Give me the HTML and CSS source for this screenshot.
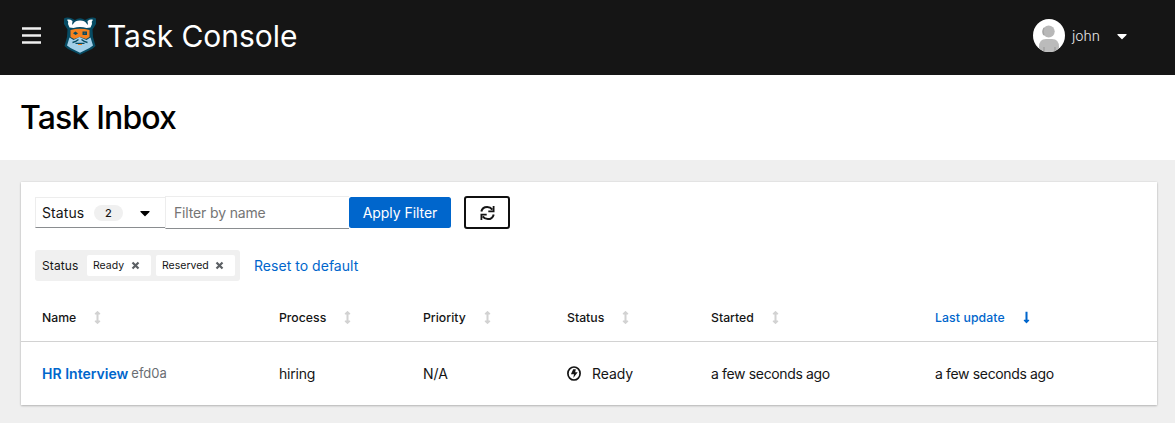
FILE: index.html
```html
<!DOCTYPE html>
<html lang="en">
<head>
<meta charset="utf-8">
<title>Task Console</title>
<link rel="stylesheet" href="styles.css">
</head>
<body>
<svg class="defs" aria-hidden="true">
  <symbol id="sort" viewBox="0 0 256 512"><path d="M214.059 377.941H168V134.059h46.059c21.382 0 32.09-25.851 16.971-40.971L144.971 7.029c-9.373-9.373-24.568-9.373-33.941 0L24.971 93.088c-15.119 15.119-4.411 40.971 16.971 40.971H88v243.882H41.941c-21.382 0-32.09 25.851-16.971 40.971l86.059 86.059c9.373 9.373 24.568 9.373 33.941 0l86.059-86.059c15.12-15.119 4.412-40.971-16.97-40.971z"/></symbol>
  <symbol id="caret" viewBox="0 0 320 512"><path d="M31.3 192h257.3c17.8 0 26.7 21.5 14.1 34.1L174.1 354.8c-7.8 7.8-20.5 7.8-28.3 0L17.2 226.1C4.6 213.5 13.5 192 31.3 192z"/></symbol>
  <symbol id="close" viewBox="0 0 9 9"><path d="M1.5 1.5l6 6M7.5 1.5l-6 6" fill="none" stroke="currentColor" stroke-width="2.2"/></symbol>
</svg>
<header class="masthead">
  <button class="menu" aria-label="Menu"><svg width="19" height="18" viewBox="0 0 19 18"><path d="M0 1.500h19M0 8.500h19M0 15.500h19" stroke="#f0f0f0" stroke-width="2.3"/></svg></button>
  <svg class="logo" width="34" height="38" viewBox="0 0 34 38">
    <path d="M1 1.500Q4-.3 9 1.600L12 3Q17-.7 22 3L25 1.600Q30-.3 33 1.500L33 7 29.500 12.500 30 20 32.500 29 29 32 17 37.800 5 32 1.500 29 4 20 4.500 12.500 1 7Z" fill="#074b63"/>
    <path d="M4 2.700Q7 2 9.500 4L9 8 10.500 6.500Q12 3.500 17 3.500 22 3.500 23.500 6.500L25 8 24.500 4Q27 2 30 2.700 28 4.500 29 7L27.500 10.500 23.500 11Q17 9 10.500 11L6.500 10.500 5 7Q6 4.500 4 2.700Z" fill="#fff"/>
    <path d="M7.500 13Q17 10.500 26.500 13L26.500 20 23 22 17 20 11 22 7.500 20Z" fill="#f58220"/>
    <path d="M10 16.200L12.500 14.500 15 16.500 12.500 18ZM19.500 14.500h4.500v3.500h-4.500Z" fill="#074b63"/>
    <path d="M21 16.200h1.500" stroke="#a65620"/>
    <path d="M6.500 20.500L10.500 23 16.500 20 23.500 23 27.500 20.500 30 28.500 26.500 31 17 35.800 7.500 31 4 28.500Z" fill="#a3cfe9"/>
    <path d="M9.500 25.500Q13 24.800 15.500 22.500M18.500 22.500Q21 24.800 24.500 25.500M12.500 26.300h9" fill="none" stroke="#074b63" stroke-width="1.300"/>
    <path d="M15 27.500h4" stroke="#f58220"/>
  </svg>
  <div class="brand">Task Console</div>
  <div class="user">
    <svg width="32" height="33" viewBox="0 0 32 33">
      <clipPath id="disc"><ellipse cx="16" cy="16.500" rx="16" ry="16.500"/></clipPath>
      <g clip-path="url(#disc)"><path d="M0 0h32v33H0z" fill="#fff"/><path d="M6 34v-6q0-8 7-8h6q7 0 7 8v6z" fill="#bbb"/><path d="M10 28h2v6h-2zM21 28h2v6h-2z" fill="#a8a8a8"/><circle cx="15.700" cy="12.500" r="6" fill="#b8b8b8"/><path d="M11 9q-2 4 0 7" fill="none" stroke="#a5a5a5" stroke-width="1.500"/></g>
    </svg>
    <span class="username">john</span>
    <svg class="caret" width="10" height="16" fill="#fff"><use href="#caret"/></svg>
  </div>
</header>
<section class="titlebar"><h1>Task Inbox</h1></section>
<main>
  <div class="card">
    <div class="toolbar">
      <button class="select"><span class="select-label">Status</span><span class="badge">2</span><svg width="10" height="16"><use href="#caret"/></svg></button>
      <input class="filter" placeholder="Filter by name" aria-label="Filter by name">
      <button class="apply">Apply Filter</button>
      <button class="refresh" aria-label="Refresh"><svg width="15" height="16" viewBox="0 0 15 16" fill="none" stroke="#151515" stroke-width="2"><path d="M1.300 6.600C2 3.600 4.200 1.900 7.200 1.900c2 0 3.800.9 5.200 2.700M13.700 9.400c-.7 3-2.900 4.700-5.900 4.700-2 0-3.800-.9-5.200-2.700"/><path d="M13.600 1v5.300H8.300M1.400 15V9.700h5.300" stroke-width="1.800"/></svg></button>
    </div>
    <div class="chips">
      <div class="group"><span class="group-label">Status</span><span class="chip ready"><span>Ready</span><svg width="9" height="9"><use href="#close"/></svg></span><span class="chip reserved"><span>Reserved</span><svg width="9" height="9"><use href="#close"/></svg></span></div>
      <a class="reset">Reset to default</a>
    </div>
    <div class="row head">
      <div><span>Name</span><svg class="sort"><use href="#sort"/></svg></div>
      <div><span>Process</span><svg class="sort"><use href="#sort"/></svg></div>
      <div><span>Priority</span><svg class="sort"><use href="#sort"/></svg></div>
      <div><span>Status</span><svg class="sort"><use href="#sort"/></svg></div>
      <div><span>Started</span><svg class="sort"><use href="#sort"/></svg></div>
      <div class="active"><span>Last update</span><svg class="sort" viewBox="0 0 256 512"><path d="M168 345.941V44c0-6.627-5.373-12-12-12h-56c-6.627 0-12 5.373-12 12v301.941H41.941c-21.382 0-32.09 25.851-16.971 40.971l86.059 86.059c9.373 9.373 24.569 9.373 33.941 0l86.059-86.059c15.119-15.119 4.411-40.971-16.971-40.971H168z"/></svg></div>
    </div>
    <div class="row body">
      <div><a class="task">HR Interview</a><span class="task-id">efd0a</span></div>
      <div class="hiring">hiring</div>
      <div>N/A</div>
      <div><svg class="bolt" width="14" height="15" viewBox="0 0 14 15"><ellipse cx="7" cy="7.500" rx="6.100" ry="6.500" fill="none" stroke="#151515" stroke-width="1.700"/><path d="M6.200 3.200h2.600L8.200 6.200h2.500L6.300 12l.7-3.700H3.900z" fill="#151515"/></svg><span class="state">Ready</span></div>
      <div class="ago">a few seconds ago</div>
      <div class="ago">a few seconds ago</div>
    </div>
  </div>
</main>
</body>
</html>
```
FILE: styles.css
```css
* { box-sizing: border-box; }
body { margin: 0; height: 423px; overflow: hidden; background: #efefef; color: #151515; font: 14px/21px Inter, "Open Sans", sans-serif; }
button, input { font: inherit; color: inherit; margin: 0; }
svg { display: block; flex: none; }
.defs { display: none; }
.masthead { height: 75px; background: #151515; display: flex; align-items: center; padding: 0 48px 4px 22px; color: #fff; }
.menu { border: 0; padding: 0; background: none; }
.logo { margin: 0 10px 0 22px; }
.brand { font-size: 30px; line-height: 40px; letter-spacing: -.05px; }
.user { margin-left: auto; display: flex; align-items: center; font-size: 14px; color: #e8e8e8; }
.username { width: 45px; margin-left: 7px; font-weight: 300; }
.titlebar { height: 85px; background: #fff; padding: 22px 20px; }
h1 { margin: 0; font-size: 32px; line-height: 42px; font-weight: 450; letter-spacing: -.85px; color: #000; }
main { padding: 22px 18px 18px 21px; }
.card { height: 223px; background: #fff; box-shadow: 0 1px 2px rgba(3,3,3,.22), 0 0 2px rgba(3,3,3,.1); }
.toolbar { display: flex; align-items: center; padding: 14px 14px 0; height: 47px; font-weight: 370; }
.select { width: 130px; height: 31px; display: flex; align-items: center; padding: 0 0 0 6px; background: #fff; border: 1px solid #ededed; border-bottom-color: #8a8d90; border-right: 0; }
.select-label { width: 52px; text-align: left; letter-spacing: .1px; }
.badge { width: 29px; height: 16px; border-radius: 8px; background: #f0f0f0; font-size: 11px; line-height: 16px; font-weight: 500; margin-right: 17px; }
.filter { width: 184px; height: 33px; padding: 0 8px; border: 1px solid #ededed; border-bottom-color: #8a8d90; border-right: 0; border-radius: 0; background: #fff; outline: 0; letter-spacing: -.15px; }
.filter::placeholder { color: #757575; opacity: 1; }
.apply { width: 102px; height: 31px; border: 0; border-radius: 2.5px; padding: 0; background: #06c; color: #fff; letter-spacing: -.05px; }
.refresh { width: 46px; height: 33px; margin-left: 13px; border: 2px solid #101010; border-radius: 3px; background: #fff; padding: 0; display: flex; align-items: center; justify-content: center; }
.chips { display: flex; align-items: center; margin: 21px 14px 0; height: 31px; font-weight: 370; }
.group { width: 205px; height: 31px; background: #f0f0f0; border-radius: 3px; display: flex; align-items: center; gap: 5px; padding-left: 7px; }
.group-label { width: 40px; font-size: 12px; letter-spacing: .1px; white-space: nowrap; }
.chip { height: 21px; background: #fff; border-radius: 2px; display: flex; align-items: center; justify-content: space-between; font-size: 10.5px; padding: 0 11px 0 6px; color: #151515; }
.chip svg { color: #5c6064; }
.ready { width: 64px; }
.reserved { width: 79px; }
.reset { margin-left: 14px; color: #06c; letter-spacing: .03px; }
.row { display: grid; grid-template-columns: 237px 144px 144px 144px 224px 1fr; padding-left: 21px; align-items: center; }
.row > div { display: flex; align-items: center; white-space: nowrap; }
.head { height: 61px; padding-top: 12px; border-bottom: 1px solid #d2d2d2; font-size: 12.25px; font-weight: 550; }
.sort { width: 7px; height: 13px; margin-left: 18px; fill: #d2d2d2; }
.active { color: #06c; letter-spacing: .1px; }
.active .sort { fill: #06c; }
.body { height: 63px; font-weight: 370; }
.task { color: #06c; font-weight: 600; margin-right: 3px; letter-spacing: .02px; }
.task-id { color: #6a6e73; font-size: 13px; }
.hiring { letter-spacing: -.2px; }
.ago { letter-spacing: -.35px; }
.bolt { margin-right: 11px; }
.state { letter-spacing: -.1px; }
```
